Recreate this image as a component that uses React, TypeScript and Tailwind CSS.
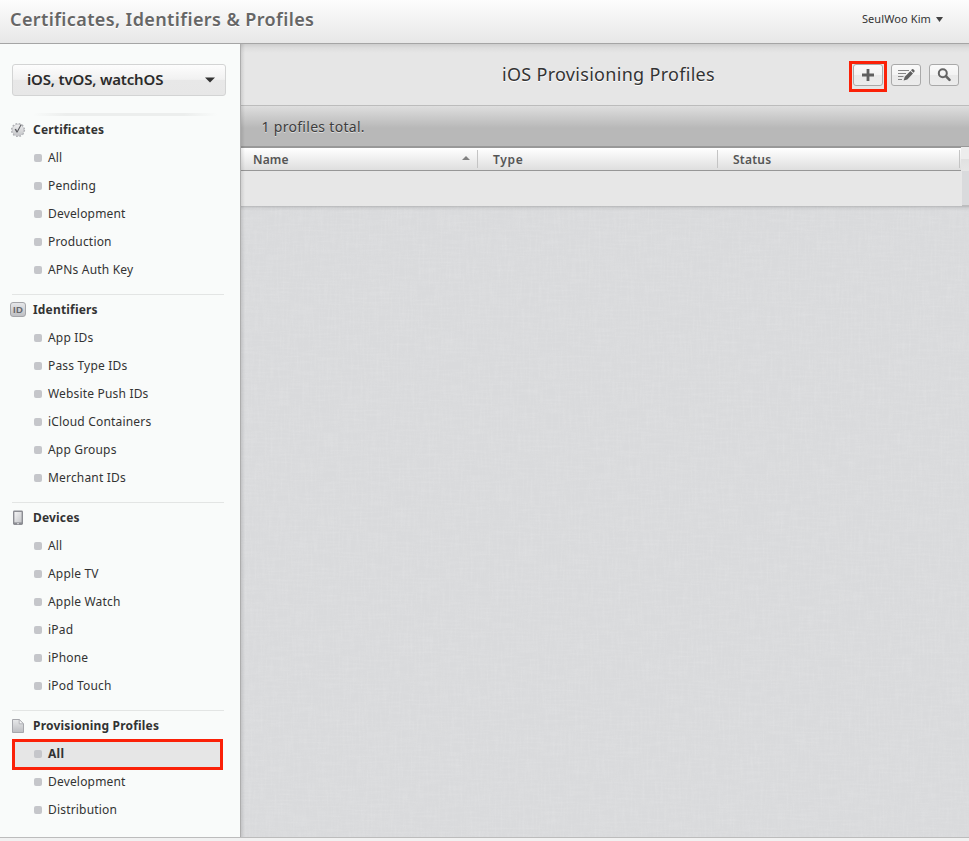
import type { ReactNode } from 'react';

interface Item {
  label: string;
  active?: boolean;
}

interface Section {
  title: string;
  icon: ReactNode;
  items: Item[];
}

function BadgeIcon(): ReactNode {
  return (
    <svg width="16" height="16" viewBox="0 0 16 16">
      <defs>
        <linearGradient id="badge" x1="0" y1="0" x2="0" y2="1">
          <stop offset="0" stopColor="#f0f0f1" />
          <stop offset="1" stopColor="#c4c5c8" />
        </linearGradient>
      </defs>
      <circle cx="8" cy="8" r="6.4" fill="none" stroke="#abadb1" strokeWidth="1.4" strokeDasharray="1.7 1.65" />
      <circle cx="8" cy="8" r="5.8" fill="url(#badge)" stroke="#bcbdc0" strokeWidth="0.8" />
      <path d="M4.6 7.2 6 6.8l1.1 2.2L10.6 2.6l1.2-.2L7.5 10.6 6.5 10.6z" fill="#5c5d61" />
    </svg>
  );
}

function IdIcon(): ReactNode {
  return (
    <span className="flex h-[15px] w-4 items-center justify-center rounded-[3px] border border-[#a4a5a9] bg-gradient-to-b from-[#e6e7e9] to-[#bfc0c4] font-['Liberation_Sans',sans-serif] text-[9.5px] font-bold leading-none text-[#66676b]">
      ID
    </span>
  );
}

function DeviceIcon(): ReactNode {
  return (
    <svg width="16" height="16" viewBox="0 0 16 16">
      <defs>
        <linearGradient id="screen" x1="0" y1="0" x2="1" y2="1">
          <stop offset="0" stopColor="#f4f4f5" />
          <stop offset="1" stopColor="#c6c7ca" />
        </linearGradient>
      </defs>
      <rect x="3" y="0.4" width="10" height="14.6" rx="1.4" fill="#8c8d93" />
      <rect x="4.4" y="2" width="7.2" height="10.4" fill="url(#screen)" />
      <rect x="7" y="13.2" width="2" height="1" fill="#dcdcdf" />
    </svg>
  );
}

function DocumentIcon(): ReactNode {
  return (
    <svg width="16" height="16" viewBox="0 0 16 16">
      <defs>
        <linearGradient id="sheet" x1="0" y1="0" x2="0" y2="1">
          <stop offset="0" stopColor="#e8e9ea" />
          <stop offset="1" stopColor="#bcbdc1" />
        </linearGradient>
      </defs>
      <path d="M2.5 1.5h6.7l4.3 4.3v8.7h-11z" fill="url(#sheet)" stroke="#a6a7ac" />
      <path d="M9.2 1.5v4.3h4.3z" fill="#f7f7f8" stroke="#a6a7ac" strokeWidth="0.8" />
    </svg>
  );
}

const sections: Section[] = [
  {
    title: 'Certificates',
    icon: <BadgeIcon />,
    items: [
      { label: 'All' },
      { label: 'Pending' },
      { label: 'Development' },
      { label: 'Production' },
      { label: 'APNs Auth Key' },
    ],
  },
  {
    title: 'Identifiers',
    icon: <IdIcon />,
    items: [
      { label: 'App IDs' },
      { label: 'Pass Type IDs' },
      { label: 'Website Push IDs' },
      { label: 'iCloud Containers' },
      { label: 'App Groups' },
      { label: 'Merchant IDs' },
    ],
  },
  {
    title: 'Devices',
    icon: <DeviceIcon />,
    items: [
      { label: 'All' },
      { label: 'Apple TV' },
      { label: 'Apple Watch' },
      { label: 'iPad' },
      { label: 'iPhone' },
      { label: 'iPod Touch' },
    ],
  },
  {
    title: 'Provisioning Profiles',
    icon: <DocumentIcon />,
    items: [{ label: 'All', active: true }, { label: 'Development' }, { label: 'Distribution' }],
  },
];

function NavItem({ label, active }: Item): ReactNode {
  return (
    <li
      className={
        active
          ? '-mt-px -mb-[2px] ml-3 flex h-[31px] w-[211px] items-center border-[3px] border-[#fb2108] bg-[#e6e6e6] pl-[19px] pb-px text-xs font-bold tracking-[0.27px] text-[#333]'
          : 'flex h-7 items-center pl-[34px] text-xs tracking-[0.18px] text-[#333]'
      }
    >
      <span className="mr-1.5 size-2 rounded-[2px] bg-[#c5c6ca]" />
      {label}
    </li>
  );
}

function Sidebar(): ReactNode {
  return (
    <nav className="w-60 shrink-0 bg-[#f9fbfa] pt-5">
      <button className="ml-3 flex h-8 w-[214px] items-center justify-between rounded-[3px] border border-[#d3d4d4] bg-[linear-gradient(#fdfdfd,#f1f1f1_48%,#e8e8e8_50%,#e7e7e7)] pl-3.5 pr-[10px] text-[15px] font-semibold tracking-[-0.17px] text-[#2b2b2b]">
        <span className="pb-[2px]">iOS, tvOS, watchOS</span>
        <svg width="10" height="6" viewBox="0 0 10 6">
          <path d="M0 .4h10L5 5.6z" fill="#333" />
        </svg>
      </button>
      <div className="ml-[33px] mt-[17px] h-[3px] w-[184px] bg-[linear-gradient(90deg,transparent,#eceeed_18%,#eceeed_82%,transparent)]" />
      {sections.map((s, i) => (
        <section key={s.title}>
          {i > 0 && <div className="mb-px ml-3 mt-[10px] h-px w-[212px] bg-[#e3e5e4]" />}
          <h2 className="flex h-7 items-center pl-[10px] text-xs font-bold tracking-[0.18px] text-[#333]">
            <span className="mr-[7px] flex size-4 items-start">{s.icon}</span>
            {s.title}
          </h2>
          <ul>
            {s.items.map((it) => (
              <NavItem key={it.label} {...it} />
            ))}
          </ul>
        </section>
      ))}
    </nav>
  );
}

const toolButton =
  'flex h-[22px] w-[30px] items-center justify-center rounded-[3px] border border-[#a9a9a9] bg-[linear-gradient(#fafafa,#f3f3f3_48%,#e9e9e9_52%,#ececec)]';

function Toolbar(): ReactNode {
  return (
    <div className="flex h-[61px] items-center bg-[linear-gradient(#cecece,#dedede_4px,#e6e6e6_9px)] pr-[10px]">
      <h1 className="flex-1 pb-[2px] pl-[261px] text-lg tracking-[0.3px] text-[#333] [text-shadow:0_1px_0_#fff]">
        iOS Provisioning Profiles
      </h1>
      <div className="mr-1 mt-[4px] flex h-[31px] w-[38px] items-start justify-center border-[3px] border-[#fb2108]">
        <button className={toolButton}>
          <svg width="12" height="12" viewBox="0 0 12 12">
            <path d="M4.6 0h2.8v4.6H12v2.8H7.4V12H4.6V7.4H0V4.6h4.6z" fill="#5f5f5f" />
          </svg>
        </button>
      </div>
      <button className={`${toolButton} mr-2 mt-[1px]`}>
        <svg width="18" height="14" viewBox="0 0 18 14">
          <path d="M1 2.5h11M1 5.5h8M1 8.5h5.5M1 11.5h4" stroke="#858585" fill="none" />
          <path d="M6.6 12.6 7.8 8.8 13.4 2.9 16 5.4l-5.7 6z" fill="#5f5f5f" />
          <path d="m14 2.3 1-1q.8-.7 1.6.1l.8.8q.6.8 0 1.5l-.9 1z" fill="#5f5f5f" />
        </svg>
      </button>
      <button className={`${toolButton} mt-[1px]`}>
        <svg width="14" height="14" viewBox="0 0 14 14">
          <circle cx="5.8" cy="5.2" r="4" fill="none" stroke="#646464" strokeWidth="2" />
          <path d="m8.9 8.2 3.6 3.6" stroke="#646464" strokeWidth="2.6" strokeLinecap="round" />
        </svg>
      </button>
    </div>
  );
}

const headCell =
  'flex h-[18px] items-center border-r border-[#c4c4c4] pt-[2px] text-xs font-semibold text-[#555]';

function ProfileTable(): ReactNode {
  return (
    <div>
      <div className="flex h-[23px]">
        <div className="flex w-[720px] items-center border-b border-[#979797] bg-[linear-gradient(#ffffff,#dedede)]">
          <div className={`${headCell} w-[237px] justify-between pl-3 pr-[7px] tracking-[0.15px]`}>
            Name
            <svg width="8" height="4" viewBox="0 0 8 4" className="-mt-1">
              <path d="M0 4 4 0l4 4z" fill="#818181" />
            </svg>
          </div>
          <div className={`${headCell} w-60 pl-[15px] tracking-[0.7px]`}>Type</div>
          <div className={`${headCell} w-[242px] pl-[15px] tracking-[0.25px]`}>Status</div>
        </div>
        <div className="-mt-px flex-1 bg-[linear-gradient(#ededed_50%,#e1e1e1_50%,#e6e6e6)]" />
      </div>
      <div className="flex h-[35px]">
        <div className="w-[721px] bg-[#e7e7e7]" />
        <div className="flex-1 border-b border-[#bdbdbe] bg-[#d9dadc]" />
      </div>
    </div>
  );
}

function Linen(): ReactNode {
  return (
    <svg className="block h-full w-full">
      <defs>
        <filter id="weft" x="0" y="0" width="100%" height="100%">
          <feTurbulence type="fractalNoise" baseFrequency="0.04 0.5" numOctaves="2" seed="3" />
          <feColorMatrix values="0 0 0 0 1  0 0 0 0 1  0 0 0 0 1  1.1 0 0 0 -0.45" />
        </filter>
        <filter id="warp" x="0" y="0" width="100%" height="100%">
          <feTurbulence type="fractalNoise" baseFrequency="0.5 0.04" numOctaves="2" seed="8" />
          <feColorMatrix values="0 0 0 0 1  0 0 0 0 1  0 0 0 0 1  1.1 0 0 0 -0.45" />
        </filter>
      </defs>
      <rect width="100%" height="100%" fill="#d9dadc" />
      <rect width="100%" height="100%" filter="url(#weft)" opacity="0.16" />
      <rect width="100%" height="100%" filter="url(#warp)" opacity="0.16" />
    </svg>
  );
}

export default function App(): ReactNode {
  return (
    <div className="flex h-[841px] w-[969px] flex-col overflow-hidden bg-[#f1f1f1] font-['Noto_Sans','Open_Sans',sans-serif]">
      <header className="flex h-11 items-center justify-between border-b border-[#a5a5a5] bg-[linear-gradient(#fdfdfd,#e7e7e7)] pb-[5px] pl-[10px] pr-[26px]">
        <div className="text-lg font-semibold tracking-[0.4px] text-[#666] [text-shadow:0_1px_0_#fff]">
          Certificates, Identifiers &amp; Profiles
        </div>
        <div className="flex items-center gap-[5px] text-[11px] tracking-[0.1px] text-[#333]">
          SeulWoo Kim
          <svg width="7" height="5" viewBox="0 0 7 5">
            <path d="M0 0h7L3.5 5z" fill="#444" />
          </svg>
        </div>
      </header>
      <div className="flex h-[793px]">
        <Sidebar />
        <main className="relative flex flex-1 flex-col border-l border-[#adadad]">
          <Toolbar />
          <div className="flex h-[43px] items-center border-b-2 border-t border-b-[#989898] border-t-[#bcbcbc] bg-[linear-gradient(#dedede,#b8b8b8_55%,#b8b8b8)] pl-[20.5px] pt-[2px] text-sm tracking-[0.3px] text-[#3d3d3d] [text-shadow:0_1px_0_#ddd]">
            1 profiles total.
          </div>
          <ProfileTable />
          <div className="relative min-h-0 flex-1">
            <Linen />
            <div className="absolute inset-x-0 top-0 h-[5px] bg-[linear-gradient(rgba(0,0,0,0.16),rgba(0,0,0,0.05)_40%,transparent)]" />
          </div>
          <div className="absolute bottom-0 left-0 top-0 w-1 bg-[linear-gradient(90deg,rgba(0,0,0,0.1),transparent)]" />
        </main>
      </div>
      <footer className="flex-1 border-t border-[#bcbcbc] bg-[#f1f1f1]" />
    </div>
  );
}
